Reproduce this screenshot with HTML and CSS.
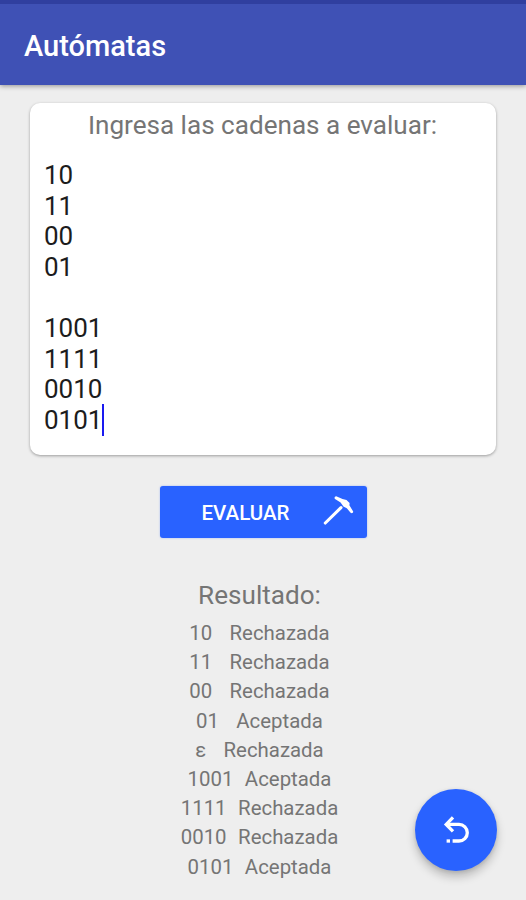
FILE: index.html
```html
<!DOCTYPE html>
<html lang="es">
<head>
  <meta charset="UTF-8">
  <title>Autómatas</title>
  <meta name="viewport" content="width=device-width, initial-scale=1.0">
  <link rel="stylesheet" href="styles.css">
</head>
<body>
  <header>
    <h1>Autómatas</h1>
  </header>
  <main>
    <section class="tarjeta">
      <h2>Ingresa las cadenas a evaluar:</h2>
      <div class="cadenas" contenteditable="true" spellcheck="false">10
11
00
01

1001
1111
0010
0101<span class="cursor"></span></div>
    </section>

    <button class="evaluar">
      <span>EVALUAR</span>
      <svg width="32" height="32" viewBox="0 0 32 32">
        <path d="M3.3 28L19 12.6" fill="none" stroke="#fff" stroke-width="3.1" stroke-linecap="round"/>
        <path d="M14.2 1.2L20.5 4L24.5 5L27.6 8L27.4 10.2L31.2 16.6C31.2 18.2 29.6 18.8 28.6 17.8L24.8 13.2L21.4 11.4L18.6 7.4L13 3.9C12 3 12.8 1.2 14.2 1.2Z" fill="#fff"/>
      </svg>
    </button>

    <section class="resultado">
      <h2>Resultado:</h2>
      <p>10   Rechazada</p>
      <p>11   Rechazada</p>
      <p>00   Rechazada</p>
      <p>01   Aceptada</p>
      <p>ε   Rechazada</p>
      <p>1001  Aceptada</p>
      <p>1111  Rechazada</p>
      <p>0010  Rechazada</p>
      <p>0101  Aceptada</p>
    </section>
  </main>

  <button class="flotante" aria-label="Regresar">
    <svg width="28" height="30" viewBox="0 0 28 30" fill="none" stroke="#fff" stroke-width="3.3">
      <path d="M11 2.4L4.2 9.4L11 16.4"/>
      <path d="M4.4 9.4H17A8.3 8.3 0 0 1 17 26H10.6"/>
      <path d="M4.6 26H8"/>
    </svg>
  </button>
</body>
</html>
```

FILE: styles.css
```css
body {
  font-family: Roboto, sans-serif;
  background: #eeeeee;
  margin: 0;
  height: 900px;
  overflow: hidden;
  color: #757575;
}
header {
  box-sizing: border-box;
  height: 85px;
  padding: 4px 24px 0;
  display: flex;
  align-items: center;
  background: #3f51b5;
  border-top: 4px solid #303f9f;
  box-shadow: 0 1px 5px rgba(0,0,0,0.4);
}
h1 {
  margin: 0;
  padding-bottom: 1px;
  font-size: 29px;
  font-weight: 500;
  color: white;
}
h2 {
  margin: 0;
  font-size: 26.1px;
  font-weight: 400;
  line-height: 30px;
  text-align: center;
}
main {
  padding: 18px 30px 0;
}
.tarjeta {
  box-sizing: border-box;
  height: 352px;
  padding: 7px 15px 0 14px;
  background: white;
  border-radius: 10px;
  box-shadow: 0 1px 3px rgba(0,0,0,0.35);
}
.cadenas {
  margin-top: 20px;
  font-size: 26px;
  line-height: 30.6px;
  white-space: pre;
  color: #1c1c1c;
  outline: none;
}
.cursor {
  display: inline-block;
  width: 2px;
  height: 32px;
  margin: -7px 0 -3px;
  vertical-align: middle;
  background: #1a1af0;
}
.evaluar {
  box-sizing: border-box;
  display: flex;
  align-items: center;
  justify-content: space-between;
  width: 207px;
  height: 52px;
  margin: 31px auto 0;
  padding: 0 13px 2px 42px;
  border: none;
  border-radius: 3px;
  background: #2962ff;
  box-shadow: 0 0 2px rgba(41,98,255,0.4);
  font-family: inherit;
  font-size: 20.5px;
  font-weight: 500;
  color: white;
}
.evaluar span {
  padding-top: 3px;
}
.resultado {
  margin-top: 42px;
  padding-right: 7px;
}
.resultado h2 {
  margin-bottom: 9px;
}
.resultado p {
  margin: 0;
  font-size: 20.4px;
  line-height: 29.2px;
  text-align: center;
  white-space: pre;
  word-spacing: 0.7px;
}
.flotante {
  position: fixed;
  right: 29px;
  bottom: 29px;
  width: 82px;
  height: 82px;
  padding: 0;
  display: flex;
  align-items: center;
  justify-content: center;
  border: none;
  border-radius: 50%;
  background: #2962ff;
  box-shadow: 0 6px 10px rgba(0,0,0,0.22), 0 1px 4px rgba(0,0,0,0.12);
}
```
